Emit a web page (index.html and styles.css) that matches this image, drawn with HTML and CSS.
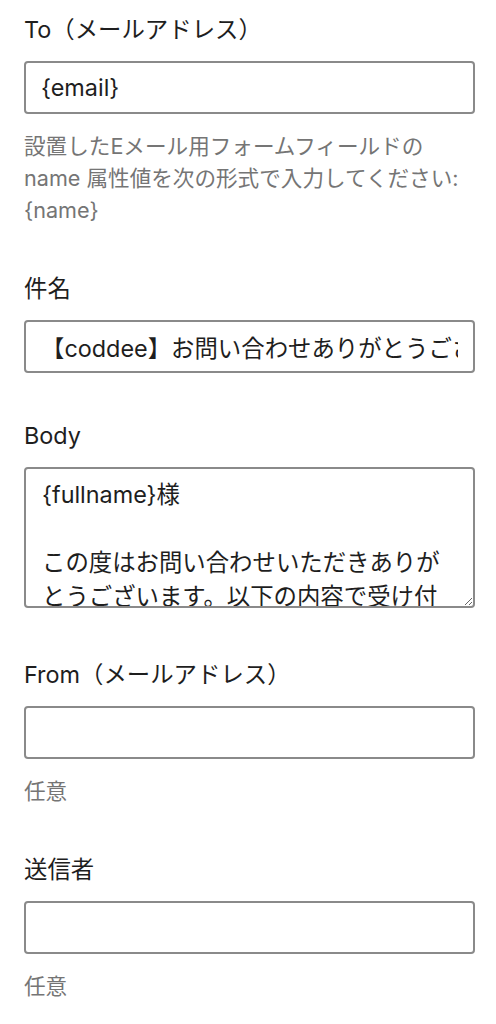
FILE: index.html
```html
<!DOCTYPE html>
<html lang="ja">
<head>
    <meta charset="UTF-8">
    <meta name="viewport" content="width=device-width, initial-scale=1.0">
    <title>メール設定</title>
    <link rel="stylesheet" href="styles.css">
</head>
<body>
    <div class="panel">
        <div class="field">
            <label class="field-label" for="mailTo">To（メールアドレス）</label>
            <input class="field-input" type="text" id="mailTo" value="{email}">
            <p class="field-help">設置したEメール用フォームフィールドの name 属性値を次の形式で入力してください: {name}</p>
        </div>

        <div class="field">
            <label class="field-label" for="subject">件名</label>
            <input class="field-input" type="text" id="subject" value="【coddee】お問い合わせありがとうございます">
        </div>

        <div class="field field-body">
            <label class="field-label" for="body">Body</label>
            <textarea class="field-input field-textarea" id="body">{fullname}様

この度はお問い合わせいただきありがとうございます。以下の内容で受け付けました。

担当者より折り返しご連絡いたしますので、今しばらくお待ちください。</textarea>
        </div>

        <div class="field">
            <label class="field-label" for="mailFrom">From（メールアドレス）</label>
            <input class="field-input" type="text" id="mailFrom">
            <p class="field-help">任意</p>
        </div>

        <div class="field">
            <label class="field-label" for="sender">送信者</label>
            <input class="field-input" type="text" id="sender">
            <p class="field-help">任意</p>
        </div>
    </div>
</body>
</html>
```

FILE: styles.css
```css
body {
    margin: 0;
    background-color: #fff;
    font-family: Inter, "Noto Sans CJK JP", sans-serif;
    color: #1e1e1e;
}

.panel {
    padding: 15px 21px 0 24px;
}

.field {
    margin-bottom: 48px;
}

.field-body {
    margin-bottom: 52px;
}

.field-label {
    display: block;
    font-size: 23.4px;
    line-height: 30px;
    margin-bottom: 16px;
    color: #1e1e1e;
}

.field-input {
    display: block;
    width: 100%;
    height: 53px;
    box-sizing: border-box;
    margin: 0;
    padding: 0 15px;
    border: 2px solid #8a8a8a;
    border-radius: 4px;
    background-color: #fff;
    font-family: Inter, "Noto Sans CJK JP", sans-serif;
    font-size: 23.4px;
    color: #1e1e1e;
    outline: none;
}

.field-textarea {
    height: 141px;
    padding: 9px 15px 0 16px;
    line-height: 34px;
    overflow: hidden;
    resize: vertical;
}

.field-help {
    margin: 16px 0 0;
    font-size: 21.6px;
    line-height: 32px;
    color: #757575;
}
```
